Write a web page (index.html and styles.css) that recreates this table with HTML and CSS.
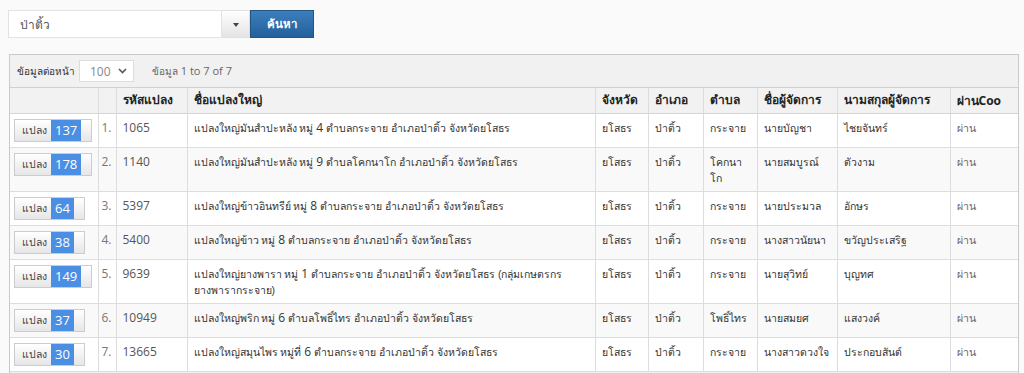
FILE: index.html
```html
<!DOCTYPE html>
<html lang="th">
<head>
<meta charset="utf-8">
<title>แปลงใหญ่</title>
<link rel="stylesheet" href="styles.css">
</head>
<body>
<div class="page">
  <div class="search">
    <input class="search-input" type="text" value="ป่าติ้ว">
    <button class="search-toggle" type="button"><span class="caret"></span></button>
    <button class="search-btn" type="button">ค้นหา</button>
  </div>

  <div class="panel">
    <div class="toolbar">
      <span class="tb-label">ข้อมูลต่อหน้า</span>
      <span class="tb-select"><span class="num">100</span>
        <svg class="chev" width="9" height="6" viewBox="0 0 9 6"><path d="M1 1l3.5 3.5L8 1" fill="none" stroke="#555" stroke-width="1.6"/></svg>
      </span>
      <span class="tb-info">ข้อมูล <span class="num">1 to 7 of 7</span></span>
    </div>
    <table class="grid">
      <colgroup>
        <col class="c-btn"><col class="c-no"><col class="c-code"><col class="c-name"><col class="c-prov"><col class="c-amp"><col class="c-tam"><col class="c-first"><col class="c-last"><col class="c-pass">
      </colgroup>
      <thead>
        <tr><th></th><th></th><th>รหัสแปลง</th><th>ชื่อแปลงใหญ่</th><th>จังหวัด</th><th>อำเภอ</th><th>ตำบล</th><th>ชื่อผู้จัดการ</th><th>นามสกุลผู้จัดการ</th><th>ผ่าน<span class="num">Coo</span></th></tr>
      </thead>
      <tbody>
        <tr><td><span class="plot-btn">แปลง <span class="badge">137</span></span></td><td class="no">1.</td><td class="code">1065</td><td class="name">แปลงใหญ่มันสำปะหลัง หมู่ <span class="num">4</span> ตำบลกระจาย อำเภอป่าติ้ว จังหวัดยโสธร</td><td>ยโสธร</td><td>ป่าติ้ว</td><td>กระจาย</td><td>นายบัญชา</td><td>ไชยจันทร์</td><td>ผ่าน</td></tr>
        <tr><td><span class="plot-btn">แปลง <span class="badge">178</span></span></td><td class="no">2.</td><td class="code">1140</td><td class="name">แปลงใหญ่มันสำปะหลัง หมู่ <span class="num">9</span> ตำบลโคกนาโก อำเภอป่าติ้ว จังหวัดยโสธร</td><td>ยโสธร</td><td>ป่าติ้ว</td><td>โคกนา<br>โก</td><td>นายสมบูรณ์</td><td>ตัวงาม</td><td>ผ่าน</td></tr>
        <tr><td><span class="plot-btn">แปลง <span class="badge">64</span></span></td><td class="no">3.</td><td class="code">5397</td><td class="name">แปลงใหญ่ข้าวอินทรีย์ หมู่ <span class="num">8</span> ตำบลกระจาย อำเภอป่าติ้ว จังหวัดยโสธร</td><td>ยโสธร</td><td>ป่าติ้ว</td><td>กระจาย</td><td>นายประมวล</td><td>อักษร</td><td>ผ่าน</td></tr>
        <tr><td><span class="plot-btn">แปลง <span class="badge">38</span></span></td><td class="no">4.</td><td class="code">5400</td><td class="name">แปลงใหญ่ข้าว หมู่ <span class="num">8</span> ตำบลกระจาย อำเภอป่าติ้ว จังหวัดยโสธร</td><td>ยโสธร</td><td>ป่าติ้ว</td><td>กระจาย</td><td class="nw">นางสาวนัยนา</td><td>ขวัญประเสริฐ</td><td>ผ่าน</td></tr>
        <tr><td><span class="plot-btn">แปลง <span class="badge">149</span></span></td><td class="no">5.</td><td class="code">9639</td><td class="name">แปลงใหญ่ยางพารา หมู่ <span class="num">1</span> ตำบลกระจาย อำเภอป่าติ้ว จังหวัดยโสธร (กลุ่มเกษตรกร<br>ยางพารากระจาย)</td><td>ยโสธร</td><td>ป่าติ้ว</td><td>กระจาย</td><td>นายสุวิทย์</td><td>บุญทศ</td><td>ผ่าน</td></tr>
        <tr><td><span class="plot-btn">แปลง <span class="badge">37</span></span></td><td class="no">6.</td><td class="code">10949</td><td class="name">แปลงใหญ่พริก หมู่ <span class="num">6</span> ตำบลโพธิ์ไทร อำเภอป่าติ้ว จังหวัดยโสธร</td><td>ยโสธร</td><td>ป่าติ้ว</td><td class="nw">โพธิ์ไทร</td><td>นายสมยศ</td><td>แสงวงค์</td><td>ผ่าน</td></tr>
        <tr><td><span class="plot-btn">แปลง <span class="badge">30</span></span></td><td class="no">7.</td><td class="code">13665</td><td class="name">แปลงใหญ่สมุนไพร หมู่ที่ <span class="num">6</span> ตำบลกระจาย อำเภอป่าติ้ว จังหวัดยโสธร</td><td>ยโสธร</td><td>ป่าติ้ว</td><td>กระจาย</td><td class="nw">นางสาวดวงใจ</td><td>ประกอบสันต์</td><td>ผ่าน</td></tr>
      </tbody>
    </table>
    <div class="panel-foot"></div>
  </div>
</div>
</body>
</html>
```
FILE: styles.css
```css
* { box-sizing: border-box; }
html, body { margin: 0; padding: 0; }
body {
  background: #fafafa;
  font-family: sans-serif;
  font-size: 10.5px;
  color: #333;
}
.num { font-family: "Open Sans", sans-serif; font-size: 12px; }
.page { padding: 10px 5px 0 8px; }

.search { display: flex; height: 28px; }
.search-input {
  width: 214px;
  height: 28px;
  border: 1px solid #e3e3e3;
  background: #fff;
  padding: 0 11px;
  font: inherit;
  font-size: 12px;
  color: #555;
  outline: none;
  margin: 0;
}
.search-toggle {
  width: 28px;
  height: 28px;
  margin: 0;
  border: 1px solid #e0e0e0;
  border-left: none;
  background: linear-gradient(#ffffff, #e4e4e4);
  display: flex;
  align-items: center;
  justify-content: center;
  padding: 0;
}
.caret {
  width: 0; height: 0;
  border-left: 3.5px solid transparent;
  border-right: 3.5px solid transparent;
  border-top: 4px solid #444;
  margin-top: 2px;
}
.search-btn {
  width: 64px;
  height: 28px;
  margin: 0;
  border: 1px solid #245580;
  background: linear-gradient(#3a7fbd, #24609a);
  color: #fff;
  font: inherit;
  font-size: 11.5px;
  font-weight: bold;
  padding: 0;
}

.panel {
  margin-top: 16px;
  margin-left: 1px;
  width: 1010px;
  border: 1px solid #c9c9c9;
  background: #f1f1f1;
}
.toolbar {
  height: 33px;
  display: flex;
  align-items: center;
  padding: 0 7px;
  border-bottom: 1px solid #d0d0d0;
  font-size: 10px;
  color: #333;
}
.tb-select {
  margin-left: 4px;
  width: 55px;
  height: 22px;
  background: #fff;
  border: 1px solid #ddd;
  color: #888;
  display: flex;
  align-items: center;
  justify-content: space-between;
  padding: 0 6px 0 10px;
}
.tb-info { margin-left: 18px; color: #666; }
.tb-info .num { font-size: 11px; }

.grid {
  width: 100%;
  border-collapse: collapse;
  table-layout: fixed;
  background: #fff;
}
.c-btn { width: 88px; }
.c-no { width: 18px; }
.c-code { width: 71px; }
.c-name { width: 408px; }
.c-prov { width: 53px; }
.c-amp { width: 55px; }
.c-tam { width: 54px; }
.c-first { width: 80px; }
.c-last { width: 113px; }
.c-pass { width: 68px; }

.grid th, .grid td {
  border: 1px solid #ddd;
  padding: 5px 6px;
  line-height: 16px;
  text-align: left;
  vertical-align: top;
}
.grid td { padding-top: 6px; }
.grid tr > :first-child { border-left: none; padding-left: 4px; padding-top: 5px; }
.grid tr > :last-child { border-right: none; }
.grid thead th {
  background: #f2f2f2;
  font-weight: bold;
  font-size: 12px;
  line-height: 17px;
  color: #222;
  border-top: none;
  border-bottom: 1px solid #d6d6d6;
  padding-top: 4px;
  padding-bottom: 3px;
  white-space: nowrap;
}
.grid tbody tr:nth-child(even) td { background: #f9f9f9; }
.grid td.no { padding-left: 3px; padding-right: 2px; color: #777; font-family: "Open Sans", sans-serif; font-size: 12px; }
.grid td.code { font-family: "Open Sans", sans-serif; font-size: 12px; color: #555; }
.grid td:last-child { color: #666; }
.grid td.nw, .grid td.name { white-space: nowrap; }

.plot-btn {
  display: inline-flex;
  align-items: stretch;
  height: 23px;
  border: 1px solid #ccc;
  background: linear-gradient(#ffffff, #e6e6e6);
  padding: 0 10px 0 7px;
  color: #444;
  font-size: 10.5px;
  line-height: 21px;
  white-space: nowrap;
}
.badge {
  background: #4a8fe4;
  color: #fff;
  font-family: "Open Sans", sans-serif;
  font-size: 13px;
  padding: 0 4px;
  margin-left: 4px;
  line-height: 21px;
}
.panel-foot { height: 12px; background: #f1f1f1; }
```
